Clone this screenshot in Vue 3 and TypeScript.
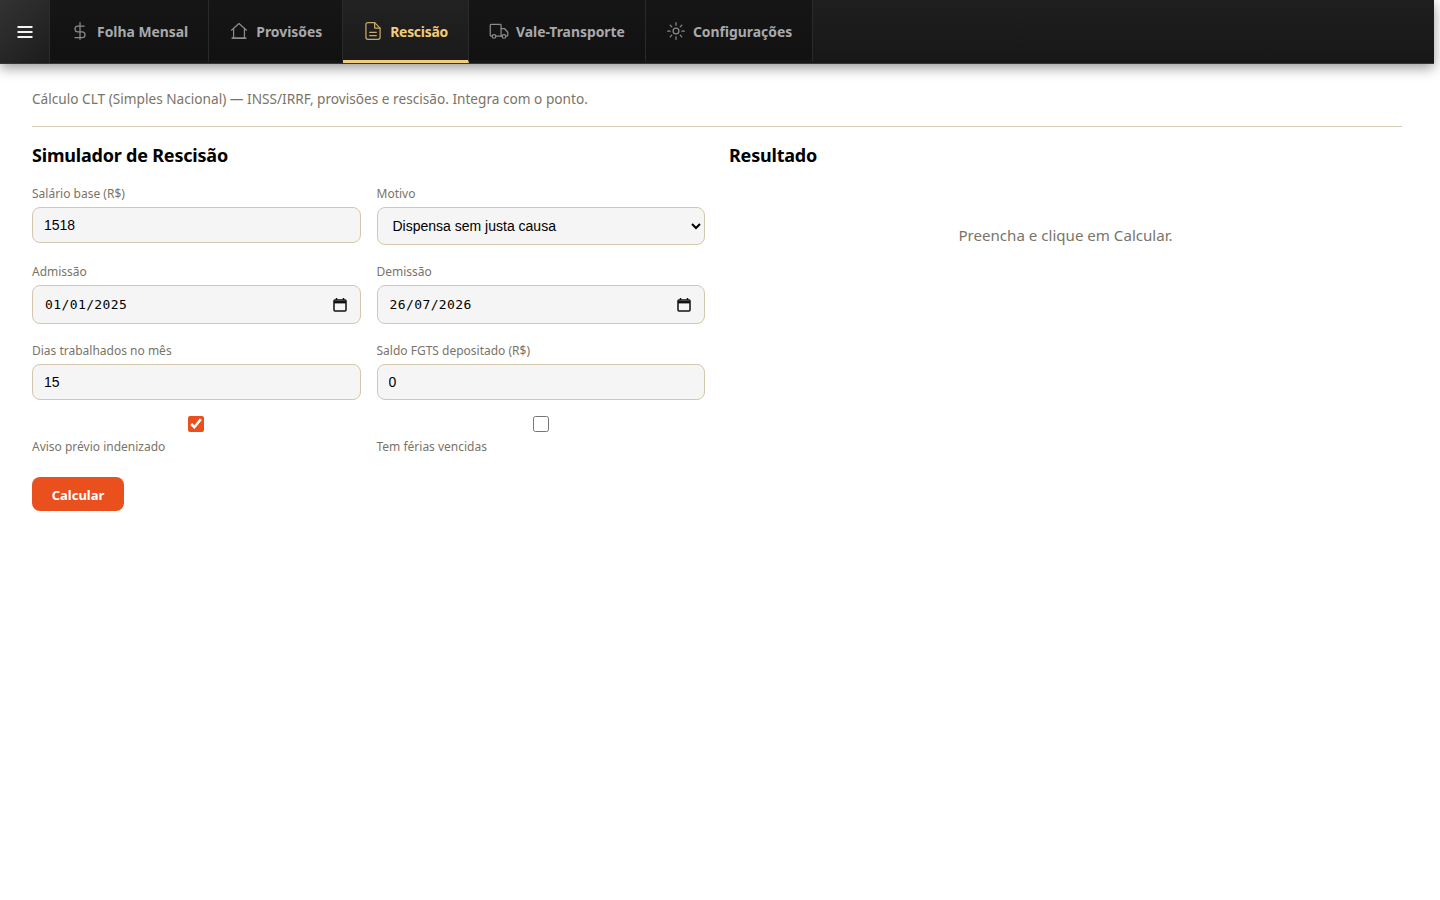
<script setup lang="ts">
import { ref } from "vue";

const salario = ref("1518");
const motivo = ref("sem_justa");
const admissao = ref("01/01/2025");
const demissao = ref("26/07/2026");
const dias = ref("15");
const saldo = ref("0");
const aviso = ref(true);
const ferias = ref(false);

const tabs = [
  { id: "folha", label: "Folha Mensal" },
  { id: "provisoes", label: "Provisões" },
  { id: "rescisao", label: "Rescisão" },
  { id: "vale", label: "Vale-Transporte" },
  { id: "config", label: "Configurações" },
];
const active = ref("rescisao");
</script>

<template>
  <div class="page">
    <nav class="topbar">
      <button class="menu-btn">
        <svg viewBox="0 0 24 24" width="20" height="20" fill="none" stroke="currentColor" stroke-width="2.4">
          <path d="M3 6h18M3 12h18M3 18h18" />
        </svg>
      </button>
      <button
        v-for="tab in tabs"
        :key="tab.id"
        class="tab"
        :class="{ active: active === tab.id }"
        @click="active = tab.id"
      >
        <svg class="tab-icon" viewBox="0 0 24 24" width="20" height="20" fill="none" stroke="currentColor" stroke-width="1.5" stroke-linecap="round" stroke-linejoin="round">
          <template v-if="tab.id === 'folha'">
            <path d="M12 2v20" />
            <path d="M17 6H9.5a3.5 3.5 0 0 0 0 7h5a3.5 3.5 0 0 1 0 7H6" />
          </template>
          <template v-else-if="tab.id === 'provisoes'">
            <path d="M3 11l9-8 9 8" />
            <path d="M5.5 9.5V20M18.5 9.5V20" />
            <path d="M4 20.5h16" stroke-width="2.2" />
          </template>
          <template v-else-if="tab.id === 'rescisao'">
            <path d="M14 2H6a2.5 2.5 0 0 0-2.5 2.5v15A2.5 2.5 0 0 0 6 22h12a2.5 2.5 0 0 0 2.5-2.5V8.5z" />
            <path d="M14 2v6.5h6.5" />
            <path d="M8 13.5h8M8 17.5h8" />
          </template>
          <template v-else-if="tab.id === 'vale'">
            <path d="M3.5 18H2.5a1 1 0 0 1-1-1V5a1 1 0 0 1 1-1h11a1 1 0 0 1 1 1v13H8" />
            <path d="M14.5 9h4l4 4.5V17a1 1 0 0 1-1 1h-1" />
            <path d="M14.5 18H16" />
            <circle cx="6" cy="18.5" r="2.2" />
            <circle cx="18" cy="18.5" r="2.2" />
          </template>
          <template v-else>
            <circle cx="12" cy="12" r="3.5" />
            <path d="M12 2v3M12 19v3M2 12h3M19 12h3M5 5l2 2M17 17l2 2M5 19l2-2M17 7l2-2" />
          </template>
        </svg>
        <span>{{ tab.label }}</span>
      </button>
    </nav>

    <main class="content">
      <p class="intro">Cálculo CLT (Simples Nacional) — INSS/IRRF, provisões e rescisão. Integra com o ponto.</p>
      <hr class="divider" />

      <div class="columns">
        <section>
          <h2 class="title">Simulador de Rescisão</h2>
          <div class="form-grid">
            <label class="field">
              <span class="field-label">Salário base (R$)</span>
              <input v-model="salario" class="input" type="number" />
            </label>
            <label class="field">
              <span class="field-label">Motivo</span>
              <select v-model="motivo" class="input select">
                <option value="sem_justa">Dispensa sem justa causa</option>
                <option value="justa">Dispensa por justa causa</option>
                <option value="pedido">Pedido de demissão</option>
              </select>
            </label>
            <label class="field">
              <span class="field-label">Admissão</span>
              <span class="input date-box">
                <input v-model="admissao" class="date-text" type="text" />
                <svg class="cal" viewBox="0 0 14 14" width="14" height="14" fill="none" stroke="currentColor">
                  <path d="M3.5 0v2M10.5 0v2" stroke-width="1.5" />
                  <rect x="1" y="2" width="12" height="11" rx="1" stroke-width="1.5" />
                  <path d="M1 4.2h12" stroke-width="2.4" />
                </svg>
              </span>
            </label>
            <label class="field">
              <span class="field-label">Demissão</span>
              <span class="input date-box">
                <input v-model="demissao" class="date-text" type="text" />
                <svg class="cal" viewBox="0 0 14 14" width="14" height="14" fill="none" stroke="currentColor">
                  <path d="M3.5 0v2M10.5 0v2" stroke-width="1.5" />
                  <rect x="1" y="2" width="12" height="11" rx="1" stroke-width="1.5" />
                  <path d="M1 4.2h12" stroke-width="2.4" />
                </svg>
              </span>
            </label>
            <label class="field">
              <span class="field-label">Dias trabalhados no mês</span>
              <input v-model="dias" class="input" type="number" />
            </label>
            <label class="field">
              <span class="field-label">Saldo FGTS depositado (R$)</span>
              <input v-model="saldo" class="input" type="number" />
            </label>
            <label class="check-field">
              <input v-model="aviso" class="check" type="checkbox" />
              <span class="field-label">Aviso prévio indenizado</span>
            </label>
            <label class="check-field">
              <input v-model="ferias" class="check" type="checkbox" />
              <span class="field-label">Tem férias vencidas</span>
            </label>
          </div>
          <button class="submit">Calcular</button>
        </section>

        <section>
          <h2 class="title">Resultado</h2>
          <p class="empty">Preencha e clique em Calcular.</p>
        </section>
      </div>
    </main>
  </div>
</template>

<style scoped>
.page {
  width: 1434px;
  min-height: 900px;
  background: #fff;
  font-family: "Noto Sans", "Open Sans", sans-serif;
}

.topbar {
  display: flex;
  height: 64px;
  box-sizing: border-box;
  border-bottom: 1px solid #39372a;
  background: linear-gradient(180deg, #1f1f1f 0%, #171717 100%);
  box-shadow: 0 4px 12px rgba(0, 0, 0, 0.4);
}

.menu-btn {
  width: 50px;
  display: flex;
  align-items: center;
  justify-content: center;
  border: none;
  border-right: 1px solid #2c2c2c;
  background: linear-gradient(135deg, #333 0%, #1c1c1c 100%);
  color: #f2f2f2;
  padding: 0;
}

.tab {
  display: flex;
  align-items: center;
  gap: 7px;
  padding: 2px 20px 0;
  border: none;
  border-right: 1px solid #2a2a2a;
  border-bottom: 3px solid transparent;
  background: linear-gradient(180deg, #161616 0%, #111 100%);
  color: #a9a9ad;
  font-family: "Noto Sans", "Open Sans", sans-serif;
  font-size: 13.9px;
  font-weight: 700;
}

.tab.active {
  background: linear-gradient(180deg, #222 0%, #1a1a1a 100%);
  color: #f0cd7c;
  border-bottom-color: #f0cd7c;
  letter-spacing: -0.25px;
}

.tab-icon {
  flex-shrink: 0;
  opacity: 0.8;
}

.content {
  padding: 24px 32px;
}

.intro {
  margin: 0;
  font-size: 13.65px;
  line-height: 22px;
  color: #7a7468;
}

.divider {
  margin: 16px 0;
  border: none;
  border-top: 1px solid #d3ccb8;
}

.columns {
  display: grid;
  grid-template-columns: 673px 1fr;
  gap: 24px;
}

.title {
  margin: 0 0 18px;
  font-size: 18px;
  line-height: 24px;
  letter-spacing: -0.2px;
  font-weight: 700;
  color: #000;
}

.form-grid {
  display: grid;
  grid-template-columns: 1fr 1fr;
  gap: 18px 16px;
}

.field {
  display: flex;
  flex-direction: column;
  gap: 4px;
}

.field-label {
  font-size: 12px;
  line-height: 18px;
  color: #7a7468;
}

.input {
  box-sizing: border-box;
  width: 100%;
  height: 36px;
  padding: 0 11px;
  border: 1px solid #d3c7ae;
  border-radius: 8px;
  background: #f5f5f5;
  color: #000;
  font-family: "Liberation Sans", Arial, sans-serif;
  font-size: 14px;
}

.select {
  height: 38px;
}

.date-box {
  display: flex;
  align-items: center;
  height: 39px;
  padding: 0 13px 0 12px;
}

.date-text {
  flex: 1;
  min-width: 0;
  padding: 0;
  border: none;
  outline: none;
  background: transparent;
  color: #000;
  font-family: "DejaVu Sans Mono", monospace;
  font-size: 13px;
  letter-spacing: 0.4px;
}

.cal {
  flex-shrink: 0;
  color: #111;
}

.check-field {
  display: flex;
  flex-direction: column;
  gap: 6px;
  margin-top: -2px;
}

.check {
  align-self: center;
  width: 16px;
  height: 16px;
  margin: 0;
  accent-color: #e9501e;
}

.submit {
  margin-top: 21px;
  width: 92px;
  height: 34px;
  padding: 1px 0 0;
  border: none;
  border-radius: 8px;
  background: #e9501e;
  color: #fff;
  font-family: "Noto Sans", "Open Sans", sans-serif;
  font-size: 13px;
  font-weight: 700;
}

.empty {
  margin: 56px 0 0;
  text-align: center;
  font-size: 15.1px;
  line-height: 24px;
  color: #7a7468;
}
</style>
